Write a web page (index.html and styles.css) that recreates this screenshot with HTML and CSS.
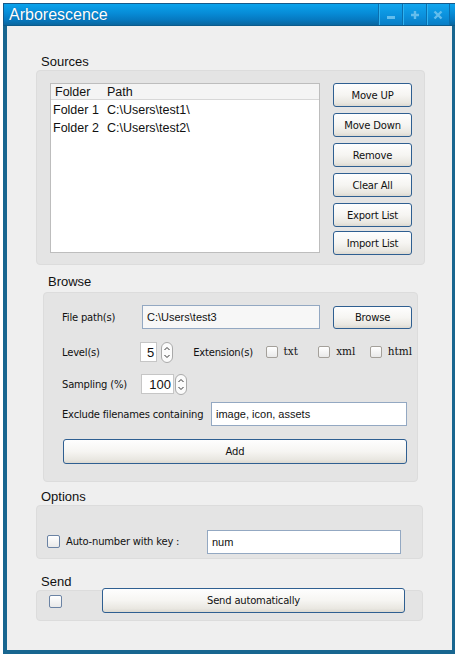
FILE: index.html
```html
<!DOCTYPE html>
<html>
<head>
<meta charset="utf-8">
<link rel="stylesheet" href="styles.css">
</head>
<body>
<div class="window">
  <div class="titlebar">
    <span class="title">Arborescence</span>
    <div class="tb-buttons">
      <div class="tb-btn"><svg width="10" height="10" viewBox="0 0 10 10"><rect x="1" y="6" width="8" height="3" fill="#63bdec"/></svg></div>
      <div class="tb-btn"><svg width="10" height="10" viewBox="0 0 10 10"><path d="M3.8 1h2.4v2.8H9v2.4H6.2V9H3.8V6.2H1V3.8h2.8z" fill="#63bdec"/></svg></div>
      <div class="tb-btn"><svg width="10" height="10" viewBox="0 0 10 10"><path d="M1.5 1.5L8.5 8.5M8.5 1.5L1.5 8.5" stroke="#63bdec" stroke-width="2.4"/></svg></div>
    </div>
  </div>
  <div class="frame">
    <div class="content">
      <div class="group-title t-sources">Sources</div>
      <div class="group g-sources">
        <div class="list">
          <div class="list-head"><span class="c1">Folder</span><span class="c2">Path</span></div>
          <div class="list-row"><span class="c1">Folder 1</span><span class="c2">C:\Users\test1\</span></div>
          <div class="list-row"><span class="c1">Folder 2</span><span class="c2">C:\Users\test2\</span></div>
        </div>
        <div class="btn-col">
          <div class="btn">Move UP</div>
          <div class="btn">Move Down</div>
          <div class="btn">Remove</div>
          <div class="btn">Clear All</div>
          <div class="btn">Export List</div>
          <div class="btn last">Import List</div>
        </div>
      </div>

      <div class="group-title t-browse">Browse</div>
      <div class="group g-browse">
        <div class="row r1">
          <span class="lbl w80">File path(s)</span>
          <div class="input path">C:\Users\test3</div>
          <div class="btn browse">Browse</div>
        </div>
        <div class="row r2">
          <span class="lbl w79">Level(s)</span>
          <div class="spin s5">5</div>
          <svg class="arrows a1" width="12" height="21" viewBox="0 0 12 21"><rect x="0.5" y="0.5" width="11" height="20" rx="5.5" fill="#fbfbfb" stroke="#a9a9a9"/><path d="M3.5 8L6 5.5L8.5 8M3.5 13L6 15.5L8.5 13" fill="none" stroke="#333" stroke-width="1"/></svg>
          <span class="lbl ext">Extension(s)</span>
          <span class="opt o-txt"><span class="check gray"></span><span class="serif">txt</span></span>
          <span class="opt o-xml"><span class="check gray"></span><span class="serif">xml</span></span>
          <span class="opt"><span class="check gray"></span><span class="serif">html</span></span>
        </div>
        <div class="row r3">
          <span class="lbl w79">Sampling (%)</span>
          <div class="spin s100">100</div>
          <svg class="arrows a2" width="12" height="21" viewBox="0 0 12 21"><rect x="0.5" y="0.5" width="11" height="20" rx="5.5" fill="#fbfbfb" stroke="#a9a9a9"/><path d="M3.5 8L6 5.5L8.5 8M3.5 13L6 15.5L8.5 13" fill="none" stroke="#333" stroke-width="1"/></svg>
        </div>
        <div class="row r4">
          <span class="lbl w149">Exclude filenames containing</span>
          <div class="input exclude">image, icon, assets</div>
        </div>
        <div class="row r5">
          <div class="btn add">Add</div>
        </div>
      </div>

      <div class="group-title t-options">Options</div>
      <div class="group g-options">
        <span class="check blue"></span>
        <span class="lbl autolbl">Auto-number with key :</span>
        <div class="input num">num</div>
      </div>

      <div class="group-title t-send">Send</div>
      <div class="group g-send">
        <span class="check blue sendcheck"></span>
        <div class="btn sendbtn">Send automatically</div>
      </div>
    </div>
  </div>
</div>
</body>
</html>
```

FILE: styles.css
```css
* { box-sizing: border-box; }
html, body { margin: 0; padding: 0; background: #ffffff; }
body { width: 458px; height: 657px; overflow: hidden; }

.window {
  margin: 3px;
  width: 452px;
  display: flex;
  flex-direction: column;
}

.titlebar {
  height: 23px;
  display: flex;
  align-items: stretch;
  justify-content: space-between;
  background: linear-gradient(#0aa3ec, #078bd6 45%, #0679c0 75%, #0a679f);
  border-top: 1px solid #15598a;
  border-left: 1px solid #15598a;
  border-bottom: 1px solid #0b5b8c;
}
.title {
  font-family: "Liberation Sans", Arial, sans-serif;
  font-size: 16px;
  color: #ffffff;
  line-height: 21px;
  padding-left: 5px;
  text-shadow: 0 0 1px rgba(0, 40, 90, 0.5);
}
.tb-buttons {
  display: flex;
  margin-right: 5px;
}
.tb-btn {
  width: 24px;
  display: flex;
  align-items: center;
  justify-content: center;
  background: linear-gradient(#12a6ee, #0a8fdb 60%, #0a7ec5);
  border-left: 1px solid #0b6fae;
  box-shadow: inset 1px 0 0 #2fb3f0;
}
.tb-btn:last-child { border-right: 1px solid #0b6fae; }

.frame {
  border-left: 4px solid #186690;
  border-right: 3px solid #186690;
  border-bottom: 4px solid #186690;
}
.content {
  height: 624px;
  background: #efefef;
  padding-left: 29px;
  display: flex;
  flex-direction: column;
  align-items: flex-start;
  font-family: "DejaVu Sans", Verdana, sans-serif;
  font-size: 10px;
  letter-spacing: -0.2px;
  color: #111;
}

.group-title {
  font-family: "Liberation Sans", Arial, sans-serif;
  font-size: 13px;
  letter-spacing: 0;
  height: 16px;
  line-height: 16px;
  padding-left: 5px;
  color: #111;
}
.t-sources { margin-top: 28px; }
.t-browse { margin-top: 9px; margin-bottom: 2px; margin-left: 7px; }
.t-options { margin-top: 7px; }
.t-send { margin-top: 15px; }

.group {
  background: #e4e4e4;
  border: 1px solid #dcdcdc;
  border-radius: 4px;
}

/* Sources */
.g-sources {
  width: 389px;
  height: 195px;
  display: flex;
  gap: 13px;
  padding: 12px 12px 0 13px;
}
.list {
  flex: 1;
  height: 170px;
  background: #ffffff;
  border: 1px solid #bdbdbd;
  font-family: "Liberation Sans", Arial, sans-serif;
  font-size: 12.5px;
  letter-spacing: 0;
  color: #111;
}
.list-head {
  height: 16px;
  line-height: 16px;
  background: #f4f4f4;
  border-bottom: 1px solid #d7d7d7;
  display: flex;
}
.list-head .c1 { width: 55px; padding-left: 4px; }
.list-head .c2 { padding-left: 1px; }
.list-row {
  height: 18px;
  line-height: 18px;
  display: flex;
}
.list-row:nth-child(2) { margin-top: 1px; }
.list-row .c1 { width: 56px; padding-left: 2px; }

.btn-col {
  width: 79px;
  display: flex;
  flex-direction: column;
  gap: 6px;
}
.btn {
  height: 24px;
  border: 1px solid #2f5f91;
  border-radius: 3px;
  background: linear-gradient(#fefefe, #f6f5f2 50%, #e9e7e1 85%, #dcd9d1);
  display: flex;
  align-items: center;
  justify-content: center;
  color: #111;
  white-space: nowrap;
}
.btn.last { margin-top: -2px; }

/* Browse */
.g-browse {
  margin-left: 7px;
  width: 375px;
  height: 190px;
  padding: 12px 5px 0 18px;
  display: flex;
  flex-direction: column;
}
.row { display: flex; align-items: center; }
.lbl { white-space: nowrap; }
.w80 { width: 80px; }
.w79 { width: 79px; }
.w149 { width: 149px; }
.r1 { height: 24px; }
.r2 { height: 22px; margin-top: 12px; }
.r3 { height: 20px; margin-top: 11px; }
.r4 { height: 24px; margin-top: 8px; }
.r5 { margin-top: 13px; }

.input {
  height: 24px;
  border: 1px solid #93a8c2;
  background: #ffffff;
  font-family: "Liberation Sans", Arial, sans-serif;
  font-size: 11px;
  letter-spacing: 0;
  color: #111;
  display: flex;
  align-items: center;
  padding-left: 4px;
}
.path { width: 178px; background: #f7f7f7; }
.browse { width: 79px; margin-left: 13px; height: 23px; }
.exclude { width: 196px; }

.spin {
  height: 20px;
  border: 1px solid #c6c6c6;
  background: #ffffff;
  font-family: "Liberation Sans", Arial, sans-serif;
  font-size: 13px;
  letter-spacing: 0;
  display: flex;
  align-items: center;
  justify-content: flex-end;
  padding-right: 2px;
}
.s5 { width: 17px; }
.s100 { width: 33px; }
.arrows { flex: none; }
.a1 { margin-left: 4px; }
.a2 { margin-left: 1px; }

.ext { margin-left: 20px; width: 73px; }
.opt { display: flex; align-items: center; }
.o-txt { width: 53px; }
.o-xml { width: 52px; }
.serif {
  font-family: "DejaVu Serif", "Liberation Serif", serif;
  font-size: 10.5px;
  letter-spacing: 0;
  margin-left: 6px;
  margin-top: -3px;
}

.check {
  flex: none;
  width: 12px;
  height: 12px;
  border-radius: 2px;
  background: linear-gradient(#ffffff, #e9e9e9);
}
.check.gray { border: 1px solid #a4a09a; }
.check.blue { width: 13px; height: 13px; border: 1px solid #6b83a4; }

.add { width: 344px; height: 25px; margin-left: 1px; }

/* Options */
.g-options {
  width: 387px;
  height: 54px;
  display: flex;
  align-items: center;
  padding: 23px 0 4px 10px;
}
.autolbl { margin-left: 6px; width: 141px; }
.num { width: 194px; }

/* Send */
.g-send {
  width: 387px;
  height: 31px;
  display: flex;
  align-items: flex-start;
  padding-left: 12px;
}
.sendcheck { margin-top: 4px; }
.sendbtn { width: 303px; height: 25px; margin-left: 40px; margin-top: -3px; }
```
